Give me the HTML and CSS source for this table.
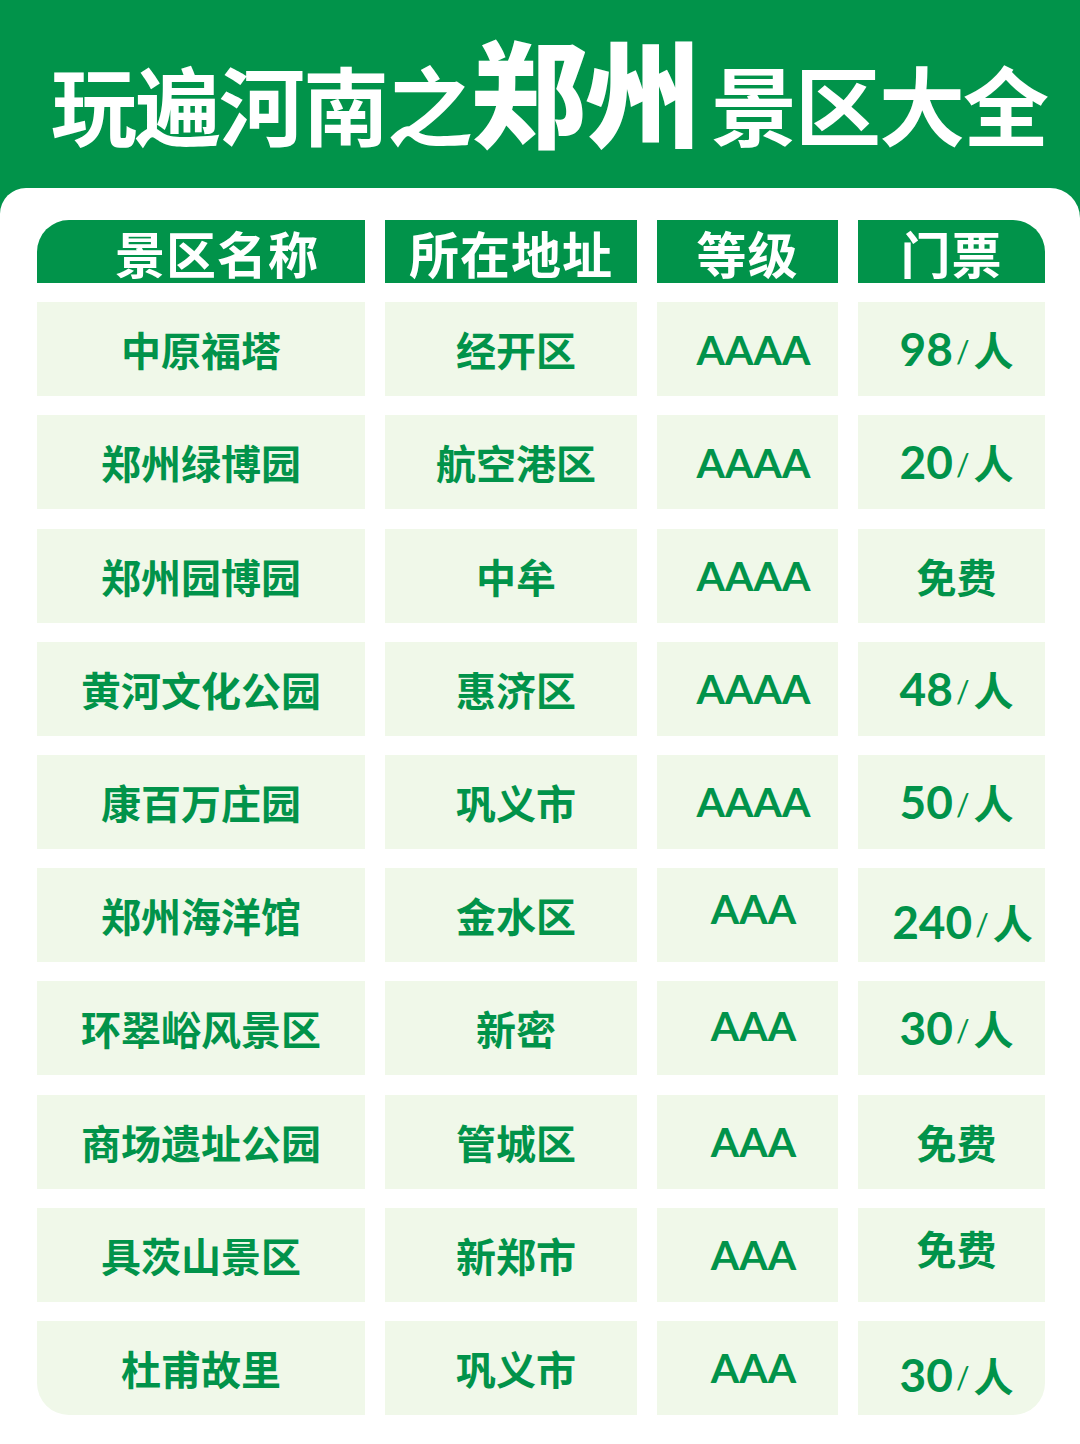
FILE: index.html
```html
<!DOCTYPE html>
<html lang="zh-CN">
<head>
<meta charset="utf-8">
<title>玩遍河南之郑州景区大全</title>
<link rel="stylesheet" href="styles.css">
</head>
<body>
<div class="page">
  <header class="hero">
    <h1 class="title">
      <span class="t-small">玩遍河南之</span><span class="t-big">郑州</span><span class="t-small t-tail">景区大全</span>
    </h1>
  </header>
  <main class="panel">
    <div class="table">
      <div class="th th-first">景区名称</div>
      <div class="th">所在地址</div>
      <div class="th">等级</div>
      <div class="th th-last">门票</div>

      <div class="td">中原福塔</div>
      <div class="td c2">经开区</div>
      <div class="td lat">AAAA</div>
      <div class="td c4"><span class="num">98</span><span class="sl">/</span>人</div>

      <div class="td">郑州绿博园</div>
      <div class="td c2">航空港区</div>
      <div class="td lat">AAAA</div>
      <div class="td c4"><span class="num">20</span><span class="sl">/</span>人</div>

      <div class="td">郑州园博园</div>
      <div class="td c2">中牟</div>
      <div class="td lat">AAAA</div>
      <div class="td c4">免费</div>

      <div class="td">黄河文化公园</div>
      <div class="td c2">惠济区</div>
      <div class="td lat">AAAA</div>
      <div class="td c4"><span class="num">48</span><span class="sl">/</span>人</div>

      <div class="td">康百万庄园</div>
      <div class="td c2">巩义市</div>
      <div class="td lat">AAAA</div>
      <div class="td c4"><span class="num">50</span><span class="sl">/</span>人</div>

      <div class="td">郑州海洋馆</div>
      <div class="td c2">金水区</div>
      <div class="td lat up">AAA</div>
      <div class="td c4 down wide"><span class="num">240</span><span class="sl">/</span>人</div>

      <div class="td">环翠峪风景区</div>
      <div class="td c2">新密</div>
      <div class="td lat up-s">AAA</div>
      <div class="td c4"><span class="num">30</span><span class="sl">/</span>人</div>

      <div class="td">商场遗址公园</div>
      <div class="td c2">管城区</div>
      <div class="td lat">AAA</div>
      <div class="td c4">免费</div>

      <div class="td">具茨山景区</div>
      <div class="td c2">新郑市</div>
      <div class="td lat">AAA</div>
      <div class="td c4 up">免费</div>

      <div class="td td-bl">杜甫故里</div>
      <div class="td c2">巩义市</div>
      <div class="td lat">AAA</div>
      <div class="td c4 td-br down"><span class="num">30</span><span class="sl">/</span>人</div>
    </div>
  </main>
</div>
</body>
</html>
```
FILE: styles.css
```css
* { box-sizing: border-box; }
html, body { margin: 0; padding: 0; }
body {
  width: 1080px;
  height: 1444px;
  overflow: hidden;
  background: #01934a;
  font-family: "Noto Sans CJK SC", "Noto Sans", sans-serif;
}
.page {
  display: flex;
  flex-direction: column;
  height: 1444px;
}
.hero {
  height: 188px;
  background: #01934a;
  padding: 30px 0 0 51px;
}
.title {
  margin: 0;
  display: flex;
  align-items: flex-end;
  color: #ffffff;
  font-weight: 700;
  line-height: 1;
}
.t-small {
  font-size: 86px;
  letter-spacing: -2px;
  line-height: 1;
}
.t-big {
  font-size: 116px;
  font-weight: 900;
  letter-spacing: -2px;
  line-height: 1;
  margin-left: 0;
}
.t-tail {
  margin-left: 12px;
}
.panel {
  flex: 1;
  background: #ffffff;
  border-radius: 26px 30px 0 0;
  padding: 32px 0 0 37px;
}
.table {
  display: grid;
  grid-template-columns: 328px 252px 181px 187px;
  grid-template-rows: 63px repeat(10, 94px);
  column-gap: 20px;
  row-gap: 19.2px;
}
.th {
  background: #01934a;
  color: #ffffff;
  font-size: 50px;
  font-weight: 700;
  display: flex;
  align-items: center;
  justify-content: center;
  line-height: 1;
  letter-spacing: 1px;
}
.th-first {
  border-top-left-radius: 32px;
  padding-left: 32px;
}
.th-last {
  border-top-right-radius: 32px;
}
.td {
  background: #f0f8e9;
  color: #01934a;
  font-size: 40px;
  font-weight: 700;
  display: flex;
  align-items: center;
  justify-content: center;
  line-height: 1;
  white-space: nowrap;
}
.c2 { padding-left: 10px; }
.c4 { padding-left: 10px; }
.lat {
  font-family: "Lato", "Noto Sans", sans-serif;
  font-size: 41px;
  font-weight: 700;
  letter-spacing: 0;
  padding-left: 12px;
}
.num {
  font-family: "Lato", "Noto Sans", sans-serif;
  font-size: 46px;
  font-weight: 700;
}
.sl {
  font-family: "Lato", "Noto Sans", sans-serif;
  font-size: 30px;
  font-weight: 400;
  margin: 0 4px 0 3px;
  display: inline-block;
  transform: translateY(2px);
}
.wide { padding-left: 22px; }
.up { padding-bottom: 14px; }
.up-s { padding-bottom: 6px; }
.down { padding-top: 14px; }
.td-bl { border-bottom-left-radius: 32px; }
.td-br { border-bottom-right-radius: 32px; }
```
